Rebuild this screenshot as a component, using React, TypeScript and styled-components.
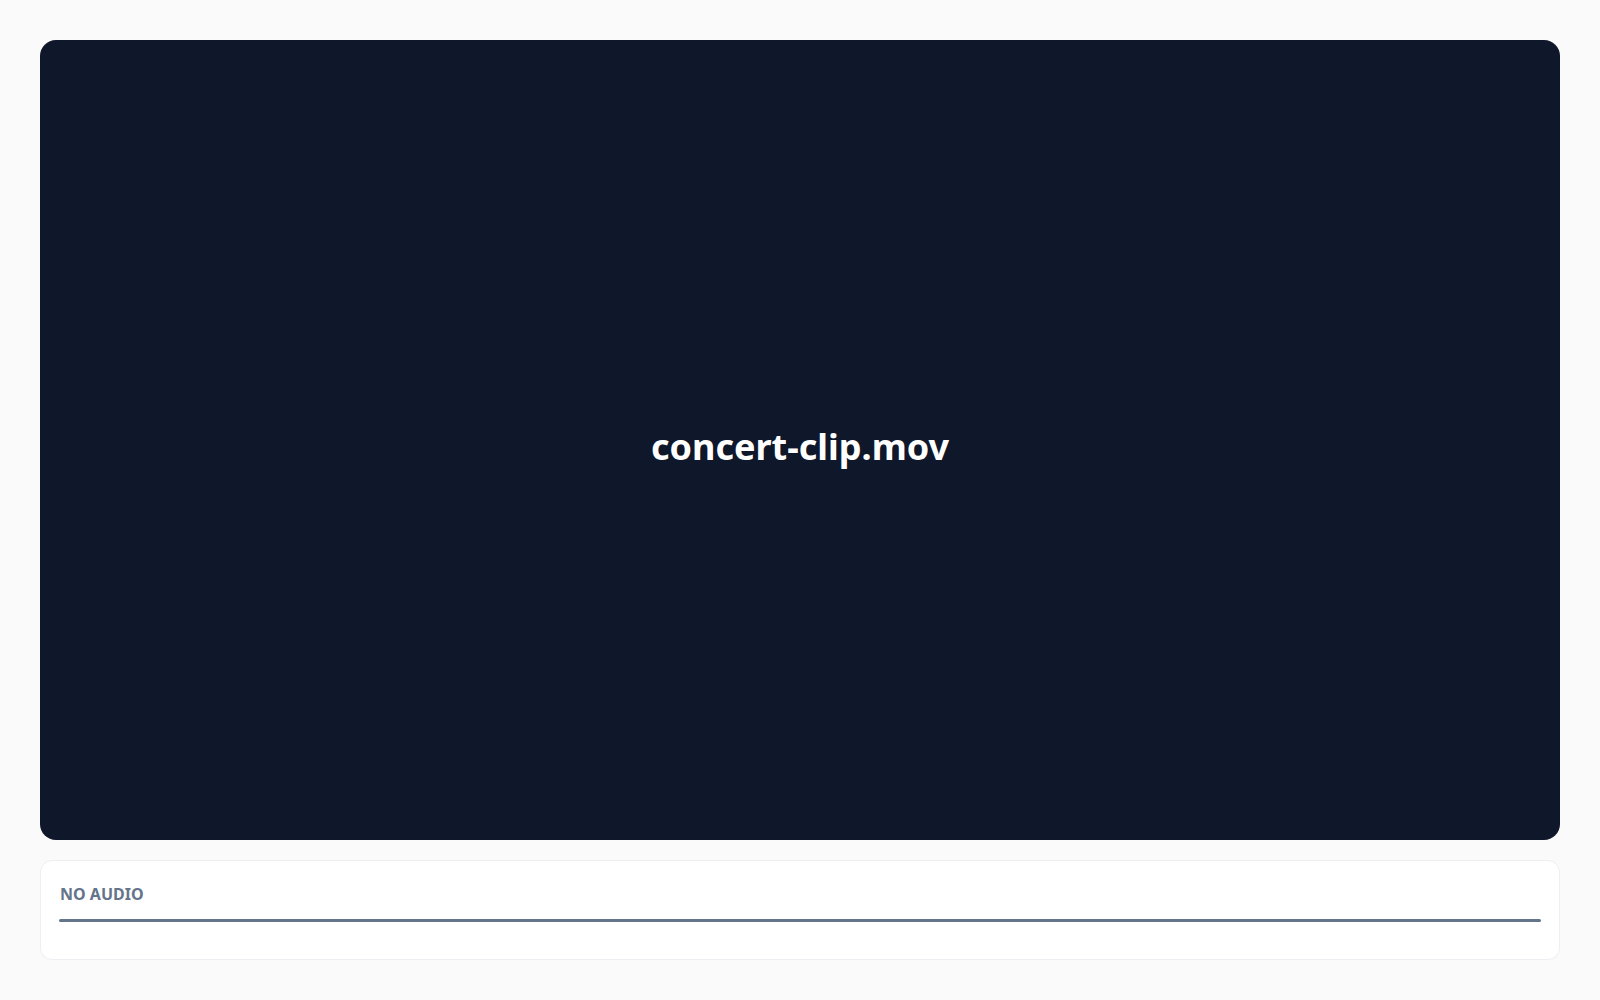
import React from 'react';
import styled, { createGlobalStyle } from 'styled-components';

const GlobalStyle = createGlobalStyle`
  * {
    box-sizing: border-box;
  }
  html, body {
    margin: 0;
    padding: 0;
    background-color: #fafafa;
    font-family: "Noto Sans", "Open Sans", sans-serif;
  }
`;

const Page = styled.div`
  display: flex;
  flex-direction: column;
  gap: 20px;
  padding: 40px;
  height: 1000px;
`;

const VideoFrame = styled.div`
  height: 800px;
  background-color: #0f172a;
  border-radius: 16px;
  display: flex;
  align-items: center;
  justify-content: center;
`;

const FileName = styled.h1`
  margin: 12px 0 0;
  color: #ffffff;
  font-size: 36px;
  font-weight: 700;
`;

const AudioPanel = styled.div`
  height: 100px;
  background-color: #ffffff;
  border: 1px solid #eceef1;
  border-radius: 12px;
  padding: 22px 18px;
  display: flex;
  flex-direction: column;
  gap: 14px;
`;

const AudioLabel = styled.span`
  color: #64748b;
  font-size: 16px;
  font-weight: 700;
  padding-left: 1px;
`;

const AudioLine = styled.div`
  height: 3px;
  border-radius: 2px;
  background-color: #64748b;
`;

const App: React.FC = () => {
  return (
    <>
      <GlobalStyle />
      <Page>
        <VideoFrame>
          <FileName>concert-clip.mov</FileName>
        </VideoFrame>
        <AudioPanel>
          <AudioLabel>NO AUDIO</AudioLabel>
          <AudioLine />
        </AudioPanel>
      </Page>
    </>
  );
};

export default App;
